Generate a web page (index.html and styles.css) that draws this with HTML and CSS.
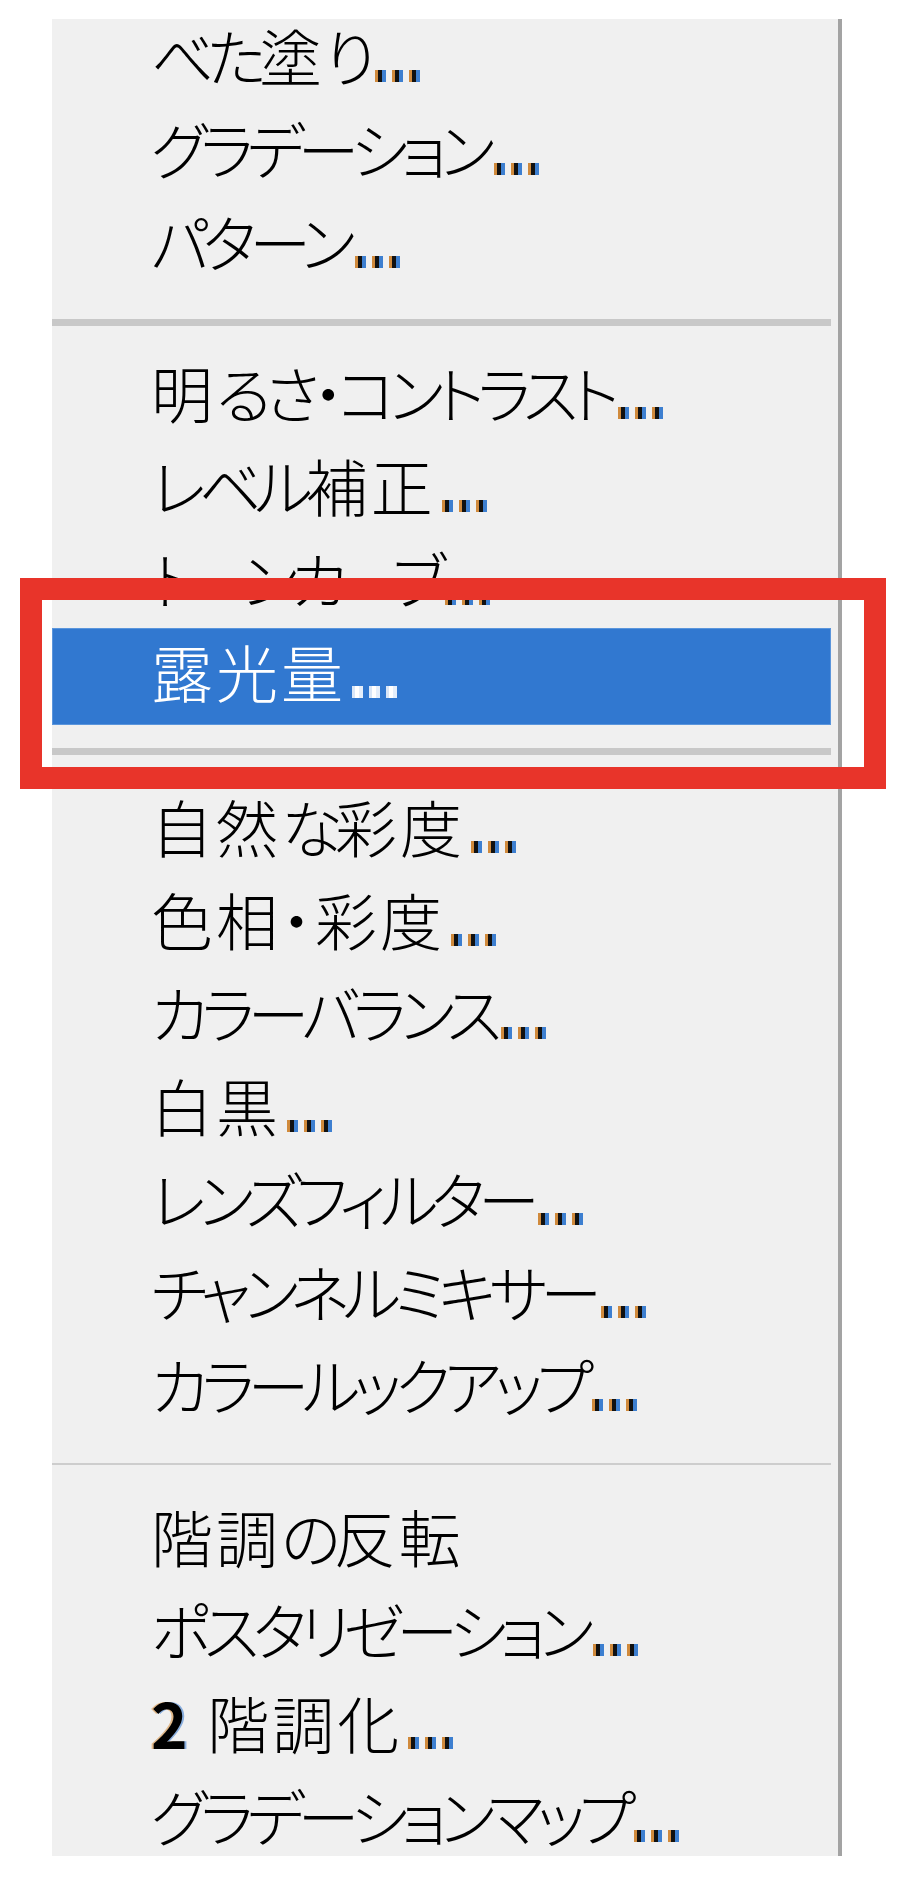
FILE: index.html
```html
<!DOCTYPE html>
<html lang="ja">
<head>
    <meta charset="UTF-8">
    <meta name="viewport" content="width=device-width, initial-scale=1.0">
    <title>色調補正メニュー</title>
    <link rel="stylesheet" href="styles.css">
</head>
<body>

    <div class="page">
        <div class="menu">
            <ul class="group">
                <li class="item top">べた<span class="kj">塗</span>り<span class="dots"><span></span><span></span><span></span></span></li>
                <li class="item">グラデーション<span class="dots"><span></span><span></span><span></span></span></li>
                <li class="item">パターン<span class="dots"><span></span><span></span><span></span></span></li>
            </ul>
            <div class="sep"></div>
            <ul class="group">
                <li class="item"><span class="kj">明</span>るさ・コントラスト<span class="dots"><span></span><span></span><span></span></span></li>
                <li class="item">レベル<span class="kj">補正</span><span class="dots"><span></span><span></span><span></span></span></li>
                <li class="item">トーンカーブ<span class="dots"><span></span><span></span><span></span></span></li>
                <li class="item active"><span class="kj">露光量</span><span class="dots"><span></span><span></span><span></span></span></li>
            </ul>
            <div class="sep sep-low"></div>
            <ul class="group">
                <li class="item"><span class="kj">自然</span>な<span class="kj">彩度</span><span class="dots"><span></span><span></span><span></span></span></li>
                <li class="item"><span class="kj">色相・彩度</span><span class="dots"><span></span><span></span><span></span></span></li>
                <li class="item">カラーバランス<span class="dots"><span></span><span></span><span></span></span></li>
                <li class="item"><span class="kj">白黒</span><span class="dots"><span></span><span></span><span></span></span></li>
                <li class="item">レンズフィルター<span class="dots"><span></span><span></span><span></span></span></li>
                <li class="item">チャンネルミキサー<span class="dots"><span></span><span></span><span></span></span></li>
                <li class="item">カラールックアップ<span class="dots"><span></span><span></span><span></span></span></li>
            </ul>
            <div class="sep thin"></div>
            <ul class="group">
                <li class="item"><span class="kj">階調</span>の<span class="kj">反転</span></li>
                <li class="item">ポスタリゼーション<span class="dots"><span></span><span></span><span></span></span></li>
                <li class="item"><span class="kj"><b class="num">2</b> 階調化</span><span class="dots"><span></span><span></span><span></span></span></li>
                <li class="item bottom">グラデーションマップ<span class="dots"><span></span><span></span><span></span></span></li>
            </ul>
        </div>

        <div class="callout"></div>
    </div>

</body>
</html>
```

FILE: styles.css
```css
body {
    margin: 0;
    background-color: #fff;
    font-family: "Noto Sans CJK JP", "Noto Sans", sans-serif;
    color: #000;
}
.page {
    position: relative;
    width: 900px;
    height: 1894px;
    padding: 19px 0 0 52px;
    box-sizing: border-box;
}
.menu {
    width: 786px;
    background-color: #f0f0f0;
    border-right: 4px solid #a3a3a3;
}
.group {
    list-style: none;
    margin: 0;
    padding: 0;
}
.item {
    height: 93px;
    line-height: 86px;
    margin-right: 7px;
    padding-left: 99px;
    font-size: 62px;
    font-weight: 300;
    font-feature-settings: "palt";
    letter-spacing: -7px;
    white-space: nowrap;
}
.item.top {
    height: 86px;
    line-height: 72px;
}
.item.bottom {
    height: 84px;
}
.kj {
    letter-spacing: 3px;
}
.item.active {
    height: 97px;
    background-color: #3178d0;
    box-shadow: inset 0 0 0 1px #5a95dc;
    color: #fff;
}
.num {
    font-weight: 700;
    text-shadow: -2px 0 rgba(214, 138, 52, 0.55), 2px 0 rgba(52, 120, 208, 0.55);
}
.dots {
    letter-spacing: 0;
}
.dots span {
    display: inline-block;
    width: 11px;
    height: 12px;
    margin-left: 6px;
    background: linear-gradient(90deg, #d08a3c 0 3px, #111 3px 7px, #3d7fd0 7px 11px);
}
.item.active .dots span {
    background: linear-gradient(90deg, #d9e6f7 0 3px, #fff 3px 7px, #e4eefb 7px 11px);
}
.sep {
    height: 7px;
    margin: 28px 7px 23px 0;
    background-color: #c8c8c8;
}
.sep.sep-low {
    margin: 23px 7px 28px 0;
}
.sep.thin {
    height: 2px;
    margin: 29px 7px 28px 0;
    background-color: #cdcdcd;
}
.callout {
    position: absolute;
    left: 20px;
    top: 578px;
    width: 866px;
    height: 211px;
    border: 22px solid #e8342a;
    box-sizing: border-box;
}
```
